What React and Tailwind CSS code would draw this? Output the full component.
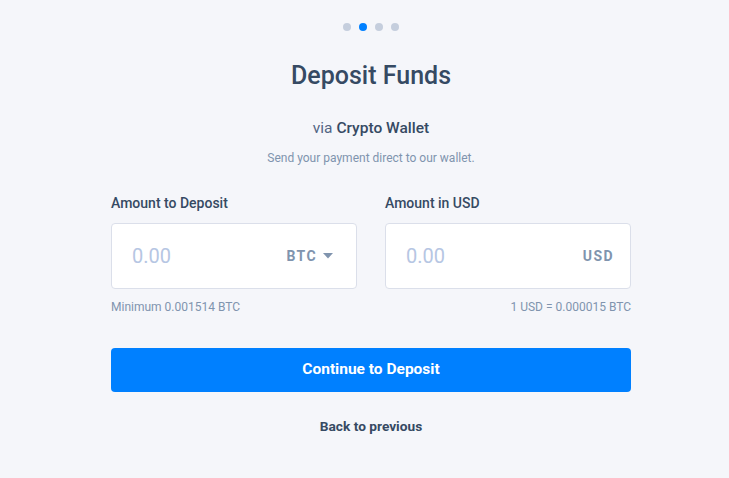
export default function App() {
  return (
    <div className="min-h-[478px] w-full bg-[#f5f6fa] pl-[13px] font-['Roboto',sans-serif] text-[#364a63]">
      <div className="mx-auto flex w-[520px] flex-col items-center pt-[23px]">
        <div className="flex gap-[8px]">
          <span className="h-[8px] w-[8px] rounded-full bg-[#c5cedd]" />
          <span className="h-[8px] w-[8px] rounded-full bg-[#0080ff]" />
          <span className="h-[8px] w-[8px] rounded-full bg-[#c5cedd]" />
          <span className="h-[8px] w-[8px] rounded-full bg-[#c5cedd]" />
        </div>
        <h1 className="mt-[30px] text-[25px] font-medium leading-[30px] text-[#364a63]">Deposit Funds</h1>
        <p className="mt-[27px] text-[15.5px] leading-[20px] text-[#526484]">
          via <span className="font-medium text-[#364a63]">Crypto Wallet</span>
        </p>
        <p className="mt-[12px] text-[12px] leading-[16px] text-[#8094ae]">Send your payment direct to our wallet.</p>

        <div className="mt-[27px] grid w-full grid-cols-2 gap-[28px]">
          <div className="flex flex-col">
            <label className="text-[14px] font-medium leading-[20px] text-[#364a63]">Amount to Deposit</label>
            <div className="mt-[10px] flex h-[66px] items-center justify-between rounded-[4px] border border-[#dbdfea] bg-white pl-[20px] pr-[23px]">
              <span className="text-[20px] text-[#b6c6e3]">0.00</span>
              <span className="flex items-center gap-[6px]">
                <span className="text-[14px] font-bold tracking-[0.1em] text-[#8094ae]">BTC</span>
                <svg width="10" height="6" viewBox="0 0 10 6"><path d="M0 0h10L5 5.5z" fill="#8094ae" /></svg>
              </span>
            </div>
            <span className="mt-[10px] text-[12px] leading-[16px] text-[#8094ae]">Minimum 0.001514 BTC</span>
          </div>
          <div className="flex flex-col">
            <label className="text-[14px] font-medium leading-[20px] text-[#364a63]">Amount in USD</label>
            <div className="mt-[10px] flex h-[66px] items-center justify-between rounded-[4px] border border-[#dbdfea] bg-white pl-[20px] pr-[16px]">
              <span className="text-[20px] text-[#b6c6e3]">0.00</span>
              <span className="text-[14px] font-bold tracking-[0.1em] text-[#8094ae]">USD</span>
            </div>
            <span className="mt-[10px] self-end text-[12px] leading-[16px] text-[#8094ae]">1 USD = 0.000015 BTC</span>
          </div>
        </div>

        <button className="mt-[33px] flex h-[44px] w-full items-center justify-center rounded-[4px] bg-[#0080ff] text-[15.5px] font-bold text-white">
          Continue to Deposit
        </button>
        <a className="mt-[25px] text-[13.7px] font-bold leading-[18px] text-[#364a63]">Back to previous</a>
      </div>
    </div>
  );
}
